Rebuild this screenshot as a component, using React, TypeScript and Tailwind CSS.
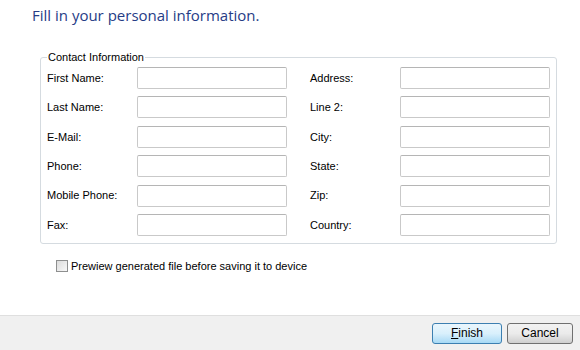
import React from 'react';

const rows: [string, string][] = [
  ['First Name:', 'Address:'],
  ['Last Name:', 'Line 2:'],
  ['E-Mail:', 'City:'],
  ['Phone:', 'State:'],
  ['Mobile Phone:', 'Zip:'],
  ['Fax:', 'Country:'],
];

function Field({ label }: { label: string }) {
  return (
    <div className="flex items-center">
      <label className="w-[90px] shrink-0 text-[11px] text-black">{label}</label>
      <input
        type="text"
        className="h-[22px] w-[150px] border border-[#c9c9c9] border-t-[#b5b5b5] bg-white rounded-[2px] px-1 text-[11px] outline-none"
      />
    </div>
  );
}

export default function App() {
  return (
    <div
      className="flex h-[350px] w-[580px] flex-col bg-white"
      style={{ fontFamily: '"Liberation Sans", Arial, sans-serif' }}
    >
      {/* Instruction */}
      <h1
        className="pl-[32px] pt-[4px] text-[15px] leading-[22px] text-[#263c86]"
        style={{ fontFamily: '"Open Sans", "Noto Sans", sans-serif' }}
      >
        Fill in your personal information.
      </h1>

      {/* Contact group */}
      <fieldset className="mt-[24px] ml-[40px] w-[517px] rounded-[3px] border border-[#d5dbe0] px-[6px] pt-[3px] pb-[7px]">
        <legend className="px-[1px] text-[11px] leading-[14px] text-black">
          Contact Information
        </legend>
        <div className="grid grid-cols-[240px_240px] gap-x-[23px] gap-y-[7.4px]">
          {rows.map(([l, r]) => (
            <React.Fragment key={l}>
              <Field label={l} />
              <Field label={r} />
            </React.Fragment>
          ))}
        </div>
      </fieldset>

      {/* Preview option */}
      <label className="mt-[14px] ml-[56px] flex items-center gap-[3px] text-[11px] text-black">
        <span className="h-[12px] w-[12px] border border-[#8e8f8f] bg-gradient-to-br from-[#dcdcdc] to-[#f8f8f8]" />
        Prewiew generated file before saving it to device
      </label>

      {/* Footer */}
      <div className="mt-auto flex h-[35px] items-center justify-end gap-[5px] border-t border-[#dfdfdf] bg-[#f0f0f0] pr-[7px]">
        <button className="h-[21px] w-[70px] rounded-[3px] border border-[#3c7fb1] bg-gradient-to-b from-[#eaf6fd] via-[#d9f0fc] to-[#a7d9f5] text-[12px] text-black">
          <span className="underline">F</span>inish
        </button>
        <button className="h-[21px] w-[66px] rounded-[3px] border border-[#707070] bg-gradient-to-b from-[#f2f2f2] via-[#ebebeb] to-[#cfcfcf] text-[12px] text-black">
          Cancel
        </button>
      </div>
    </div>
  );
}
